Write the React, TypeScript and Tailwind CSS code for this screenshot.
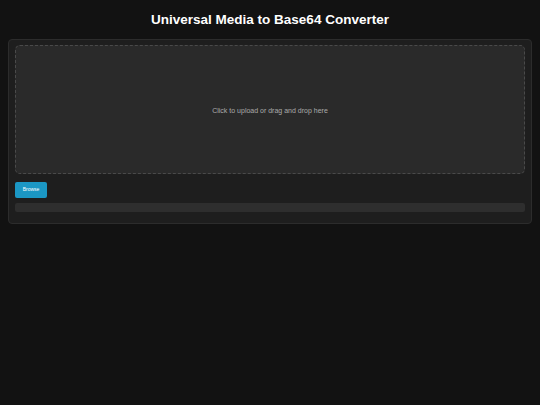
import React, { useRef, useState } from 'react'

const App = () => {
    const inputRef = useRef<HTMLInputElement>(null);
    const [progress] = useState(0);

    return (
        <div className="min-h-[405px] bg-[#121212] px-2 pt-[13px] font-['Liberation_Sans',Arial,sans-serif] text-[#e0e0e0]">
            <h1 className="text-center text-[13.5px] leading-[14px] font-bold text-white">Universal Media to Base64 Converter</h1>
            <div className="mt-[12px] rounded-[4px] border border-[#2c2c2c] bg-[#1e1e1e] px-[6px] pt-[5px] pb-[11px]">
                <div
                    onClick={() => inputRef.current?.click()}
                    className="flex h-[129px] cursor-pointer items-center justify-center rounded-[5px] border border-dashed border-[#4a4a4a] bg-[#2a2a2a]"
                >
                    <p className="mt-[2px] text-[7px] leading-[8px] text-[#aaaaaa]">Click to upload or drag and drop here</p>
                    <input ref={inputRef} type="file" className="hidden" />
                </div>
                <button
                    type="button"
                    onClick={() => inputRef.current?.click()}
                    className="mt-[7px] h-[16px] w-[32px] rounded-[2px] bg-[#1b97c4] text-[5px] text-white"
                >
                    Browse
                </button>
                <div className="mt-[5px] h-[9px] rounded-[2px] bg-[#2e2e2e]">
                    <div className="h-full rounded-[2px] bg-[#1b97c4]" style={{ width: `${progress}%` }} />
                </div>
            </div>
        </div>
    );
};

export default App
